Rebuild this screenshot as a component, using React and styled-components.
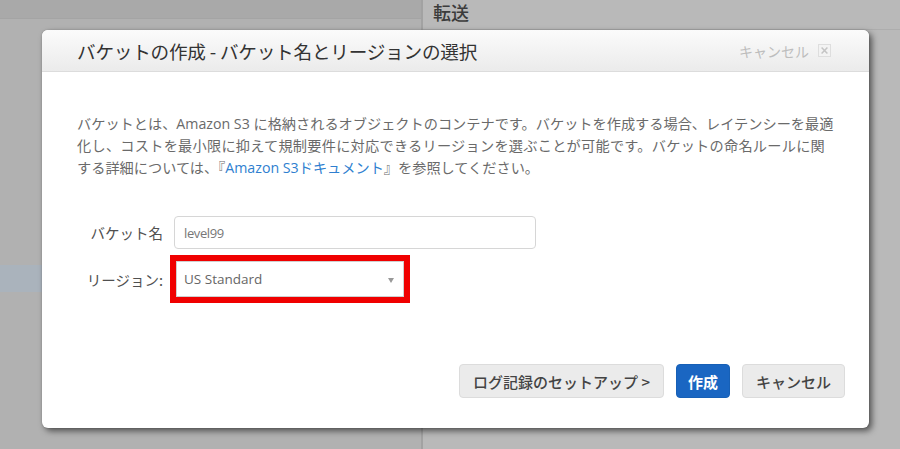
import React from "react";
import styled, { createGlobalStyle } from "styled-components";

const Global = createGlobalStyle`
  html, body { margin: 0; padding: 0; }
  body {
    width: 900px; height: 449px; overflow: hidden;
    font-family: "Open Sans", "Noto Sans CJK JP", sans-serif;
    background: #b6b6b6;
  }
`;

const Page = styled.div`
  position: relative;
  width: 900px;
  height: 449px;
  display: flex;
  overflow: hidden;
`;

const LeftPane = styled.div`
  width: 421px;
  display: flex;
  flex-direction: column;
  background: #b1b1b1;
  border-right: 2px solid #a2a2a2;
`;

const LeftTopBar = styled.div`
  height: 18px;
  background: #a9a9a9;
  border-bottom: 1px solid #a4a4a4;
`;

const LeftSpacer = styled.div`
  height: ${(p) => p.h}px;
`;

const SelectedRow = styled.div`
  height: 27px;
  background: #aab3bc;
`;

const RightPane = styled.div`
  flex: 1;
  display: flex;
  flex-direction: column;
  background: #b9b9b9;
`;

const RightHeading = styled.div`
  height: 30px;
  padding-left: 10px;
  font-family: "Noto Sans CJK JP", sans-serif;
  font-size: 18px;
  font-weight: 500;
  color: #3c3c3c;
  line-height: 24px;
  border-bottom: 1px solid #adadad;
  box-sizing: border-box;
`;

const Dialog = styled.div`
  position: absolute;
  left: 42px;
  top: 30px;
  width: 827px;
  height: 398px;
  background: #fff;
  border-radius: 6px;
  box-shadow: 3px 3px 6px rgba(0, 0, 0, 0.55), 0 0 2px rgba(0, 0, 0, 0.2);
  display: flex;
  flex-direction: column;
  overflow: hidden;
`;

const Header = styled.div`
  height: 42px;
  box-sizing: border-box;
  padding: 0 38px 0 35px;
  display: flex;
  align-items: center;
  justify-content: space-between;
  background: linear-gradient(#fbfbfb, #ebebeb);
  border-bottom: 1px solid #dcdcdc;
`;

const Title = styled.h1`
  margin: 0;
  font-family: "Noto Sans CJK JP", sans-serif;
  font-size: 18.6px;
  font-weight: 400;
  color: #333;
  letter-spacing: -0.2px;
`;

const HeaderCancel = styled.div`
  display: flex;
  align-items: center;
  gap: 9px;
  font-family: "Noto Sans CJK JP", sans-serif;
  font-size: 14px;
  color: #bdbdbd;
`;

const CloseBox = styled.span`
  width: 13px;
  height: 13px;
  border: 1px solid #dedede;
  background: #f3f3f3;
  display: flex;
  align-items: center;
  justify-content: center;
  box-sizing: border-box;
`;

const Body = styled.div`
  flex: 1;
  padding: 41px 35px 0 35px;
  display: flex;
  flex-direction: column;
`;

const Description = styled.p`
  margin: 0;
  white-space: nowrap;
  font-family: "Open Sans", "Noto Sans CJK JP", sans-serif;
  font-size: 14.2px;
  line-height: 22px;
  color: #6a6a6a;
`;

const Line = styled.span`
  letter-spacing: ${(p) => p.ls || 0}px;
`;

const Link = styled.a`
  color: #2f7fd0;
  text-decoration: none;
`;

const Form = styled.div`
  margin-top: 37px;
  display: grid;
  grid-template-columns: 86px auto;
  column-gap: 11px;
  row-gap: 6px;
  align-items: center;
`;

const Label = styled.label`
  text-align: right;
  font-family: "Noto Sans CJK JP", sans-serif;
  font-size: 14.5px;
  color: #505050;
`;

const TextInput = styled.div`
  width: 362px;
  height: 33px;
  box-sizing: border-box;
  border: 1px solid #d6d6d6;
  border-radius: 4px;
  padding: 0 9px;
  display: flex;
  align-items: center;
  font-family: "Open Sans", sans-serif;
  font-size: 13px;
  color: #777;
  letter-spacing: -0.4px;
`;

const Highlight = styled.div`
  width: 240px;
  height: 48px;
  box-sizing: border-box;
  border: 6px solid #f00000;
  margin-left: -4px;
`;

const Select = styled.div`
  height: 100%;
  box-sizing: border-box;
  border: 1px solid #cfcfcf;
  background: #fff;
  padding: 0 9px 0 7px;
  display: flex;
  align-items: center;
  justify-content: space-between;
  font-family: "Open Sans", sans-serif;
  font-size: 13.5px;
  color: #666;
`;

const Caret = styled.span`
  width: 0;
  height: 0;
  border-left: 3.5px solid transparent;
  border-right: 3.5px solid transparent;
  border-top: 5px solid #999;
  margin-top: 2px;
`;

const Footer = styled.div`
  display: flex;
  justify-content: flex-end;
  gap: 12px;
  padding: 0 24px 30px 0;
`;

const Button = styled.button`
  height: 34px;
  box-sizing: border-box;
  padding: 0 ${(p) => (p.primary ? 11 : 13)}px;
  border-radius: 4px;
  border: 1px solid ${(p) => (p.primary ? "#1760b6" : "#dcdcdc")};
  background: ${(p) => (p.primary ? "#1a66c2" : "#ebebeb")};
  color: ${(p) => (p.primary ? "#fff" : "#444")};
  font-family: "Noto Sans CJK JP", sans-serif;
  font-size: 15px;
  font-weight: ${(p) => (p.primary ? 700 : 500)};
  display: flex;
  align-items: center;
`;

export default function App() {
  return (
    <>
      <Global />
      <Page>
        <LeftPane>
          <LeftTopBar />
          <LeftSpacer h={246} />
          <SelectedRow />
        </LeftPane>
        <RightPane>
          <RightHeading>転送</RightHeading>
        </RightPane>
        <Dialog>
          <Header>
            <Title>バケットの作成 - バケット名とリージョンの選択</Title>
            <HeaderCancel>
              キャンセル
              <CloseBox>
                <svg width="7" height="7" viewBox="0 0 6 6">
                  <path d="M0.5 0.5 L5.5 5.5 M5.5 0.5 L0.5 5.5" stroke="#c4c4c4" strokeWidth="1.3" />
                </svg>
              </CloseBox>
            </HeaderCancel>
          </Header>
          <Body>
            <Description>
              <Line>
                バケットとは、Amazon S3 に格納されるオブジェクトのコンテナです。バケットを作成する場合、レイテンシーを最適
              </Line>
              <br />
              <Line ls={0.25}>
                化し、コストを最小限に抑えて規制要件に対応できるリージョンを選ぶことが可能です。バケットの命名ルールに関
              </Line>
              <br />
              <Line>
                する詳細については、『<Link href="#">Amazon S3ドキュメント</Link>』を参照してください。
              </Line>
            </Description>
            <Form>
              <Label>バケット名</Label>
              <TextInput>level99</TextInput>
              <Label>リージョン:</Label>
              <Highlight>
                <Select>
                  US Standard
                  <Caret />
                </Select>
              </Highlight>
            </Form>
          </Body>
          <Footer>
            <Button>ログ記録のセットアップ &gt;</Button>
            <Button primary>作成</Button>
            <Button>キャンセル</Button>
          </Footer>
        </Dialog>
      </Page>
    </>
  );
}
